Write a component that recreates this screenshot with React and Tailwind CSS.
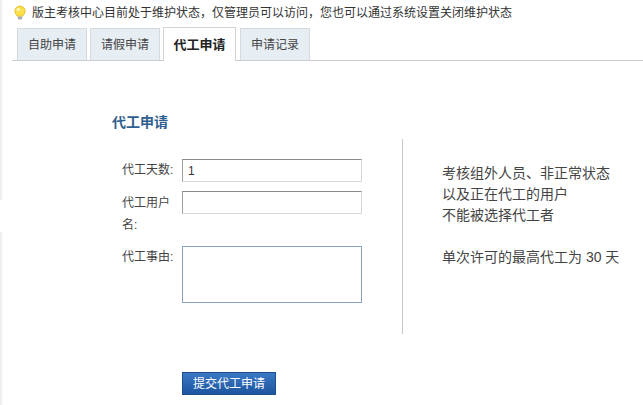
import React from 'react';

const tabs = [
    { label: '自助申请' },
    { label: '请假申请' },
    { label: '代工申请', active: true },
    { label: '申请记录' },
];

const Bulb = () => (
    <svg width="14" height="16" viewBox="0 0 14 16" className="shrink-0">
        <path d="M7 1a5.2 5.2 0 0 0-5.2 5.2c0 2.2 1.6 3.2 2.4 5h5.6c.8-1.8 2.4-2.8 2.4-5A5.2 5.2 0 0 0 7 1z" fill="#fbe04a" stroke="#e0b92a" strokeWidth="0.8" />
        <ellipse cx="5.4" cy="4.6" rx="1.8" ry="1.5" fill="#fff7c0" />
        <rect x="4.8" y="11.4" width="4.4" height="3" rx="1" fill="#a9aeb5" />
    </svg>
);

const App = () => {
    return (
        <div className="w-[643px] h-[405px] overflow-hidden flex bg-white text-[12px] text-[#444] font-['Liberation_Sans','Noto_Sans_CJK_SC',sans-serif]">
            {/* Left edge strip */}
            <div className="w-[2px] shrink-0 flex flex-col">
                <div className="h-[200px] bg-[#efefef]"></div>
                <div className="h-[32px]"></div>
                <div className="flex-1 bg-[#efefef]"></div>
            </div>

            <div className="flex-1">
                {/* Notice */}
                <div className="h-[27px] pl-[11px] pt-[5px] flex items-start gap-[5px] leading-[16px]">
                    <Bulb />
                    <span className="text-[#333]">版主考核中心目前处于维护状态，仅管理员可以访问，您也可以通过系统设置关闭维护状态</span>
                </div>

                {/* Tabs */}
                <div className="ml-[10px] h-[34px] pl-[5px] flex items-start gap-[3px] border-b border-[#c9ced4]">
                    {tabs.map(tab => (
                        <div
                            key={tab.label}
                            className={tab.active
                                ? "w-[73px] h-[34px] mr-[1px] pt-[1px] bg-white border border-b-0 border-[#cfd4da] flex items-center justify-center font-bold text-[13px] text-[#222]"
                                : "w-[70px] h-[32px] mt-[1px] pt-[1px] bg-[#e6edf3] border border-b-0 border-[#d5dae0] flex items-center justify-center text-[#444]"}
                        >
                            {tab.label}
                        </div>
                    ))}
                </div>

                {/* Form area */}
                <div className="pl-[110px] pt-[51px]">
                    <h2 className="text-[14px] leading-[20px] font-bold text-[#2f5f8f]">代工申请</h2>
                    <div className="flex mt-[7px]">
                        <div className="w-[250px] pt-[20px] mr-[40px]">
                            <div className="flex h-[32px] pl-[10px]">
                                <label className="w-[60px] pt-[2px] leading-[18px]">代工天数:</label>
                                <div className="w-[180px] h-[23px] border border-[#d8d8d8] border-t-[#8a8a8a] border-l-[#a0a0a0] pl-[5px] leading-[22px] text-[#333]">1</div>
                            </div>
                            <div className="flex h-[55px] pl-[10px]">
                                <label className="w-[60px] pt-[1px] leading-[22px] pr-[8px]">代工用户名:</label>
                                <div className="w-[180px] h-[23px] border border-[#d8d8d8] border-t-[#8a8a8a] border-l-[#a0a0a0]"></div>
                            </div>
                            <div className="flex pl-[10px]">
                                <label className="w-[60px] pt-[2px] leading-[18px]">代工事由:</label>
                                <div className="w-[180px] h-[57px] border border-[#8aa2bd]"></div>
                            </div>
                        </div>
                        <div className="w-px h-[195px] bg-[#c8c8c8] mr-[39px]"></div>
                        <div className="pt-[24px] text-[14px] leading-[21px] text-[#444]">
                            <p>考核组外人员、非正常状态</p>
                            <p>以及正在代工的用户</p>
                            <p>不能被选择代工者</p>
                            <p className="mt-[21px]">单次许可的最高代工为 30 天</p>
                        </div>
                    </div>
                    <button className="block ml-[70px] mt-[38px] w-[94px] h-[23px] bg-gradient-to-b from-[#3b78c4] to-[#1c559f] border border-[#1d4f8f] text-white text-[12px] leading-[20px]">
                        提交代工申请
                    </button>
                </div>
            </div>
        </div>
    );
};

export default App;
